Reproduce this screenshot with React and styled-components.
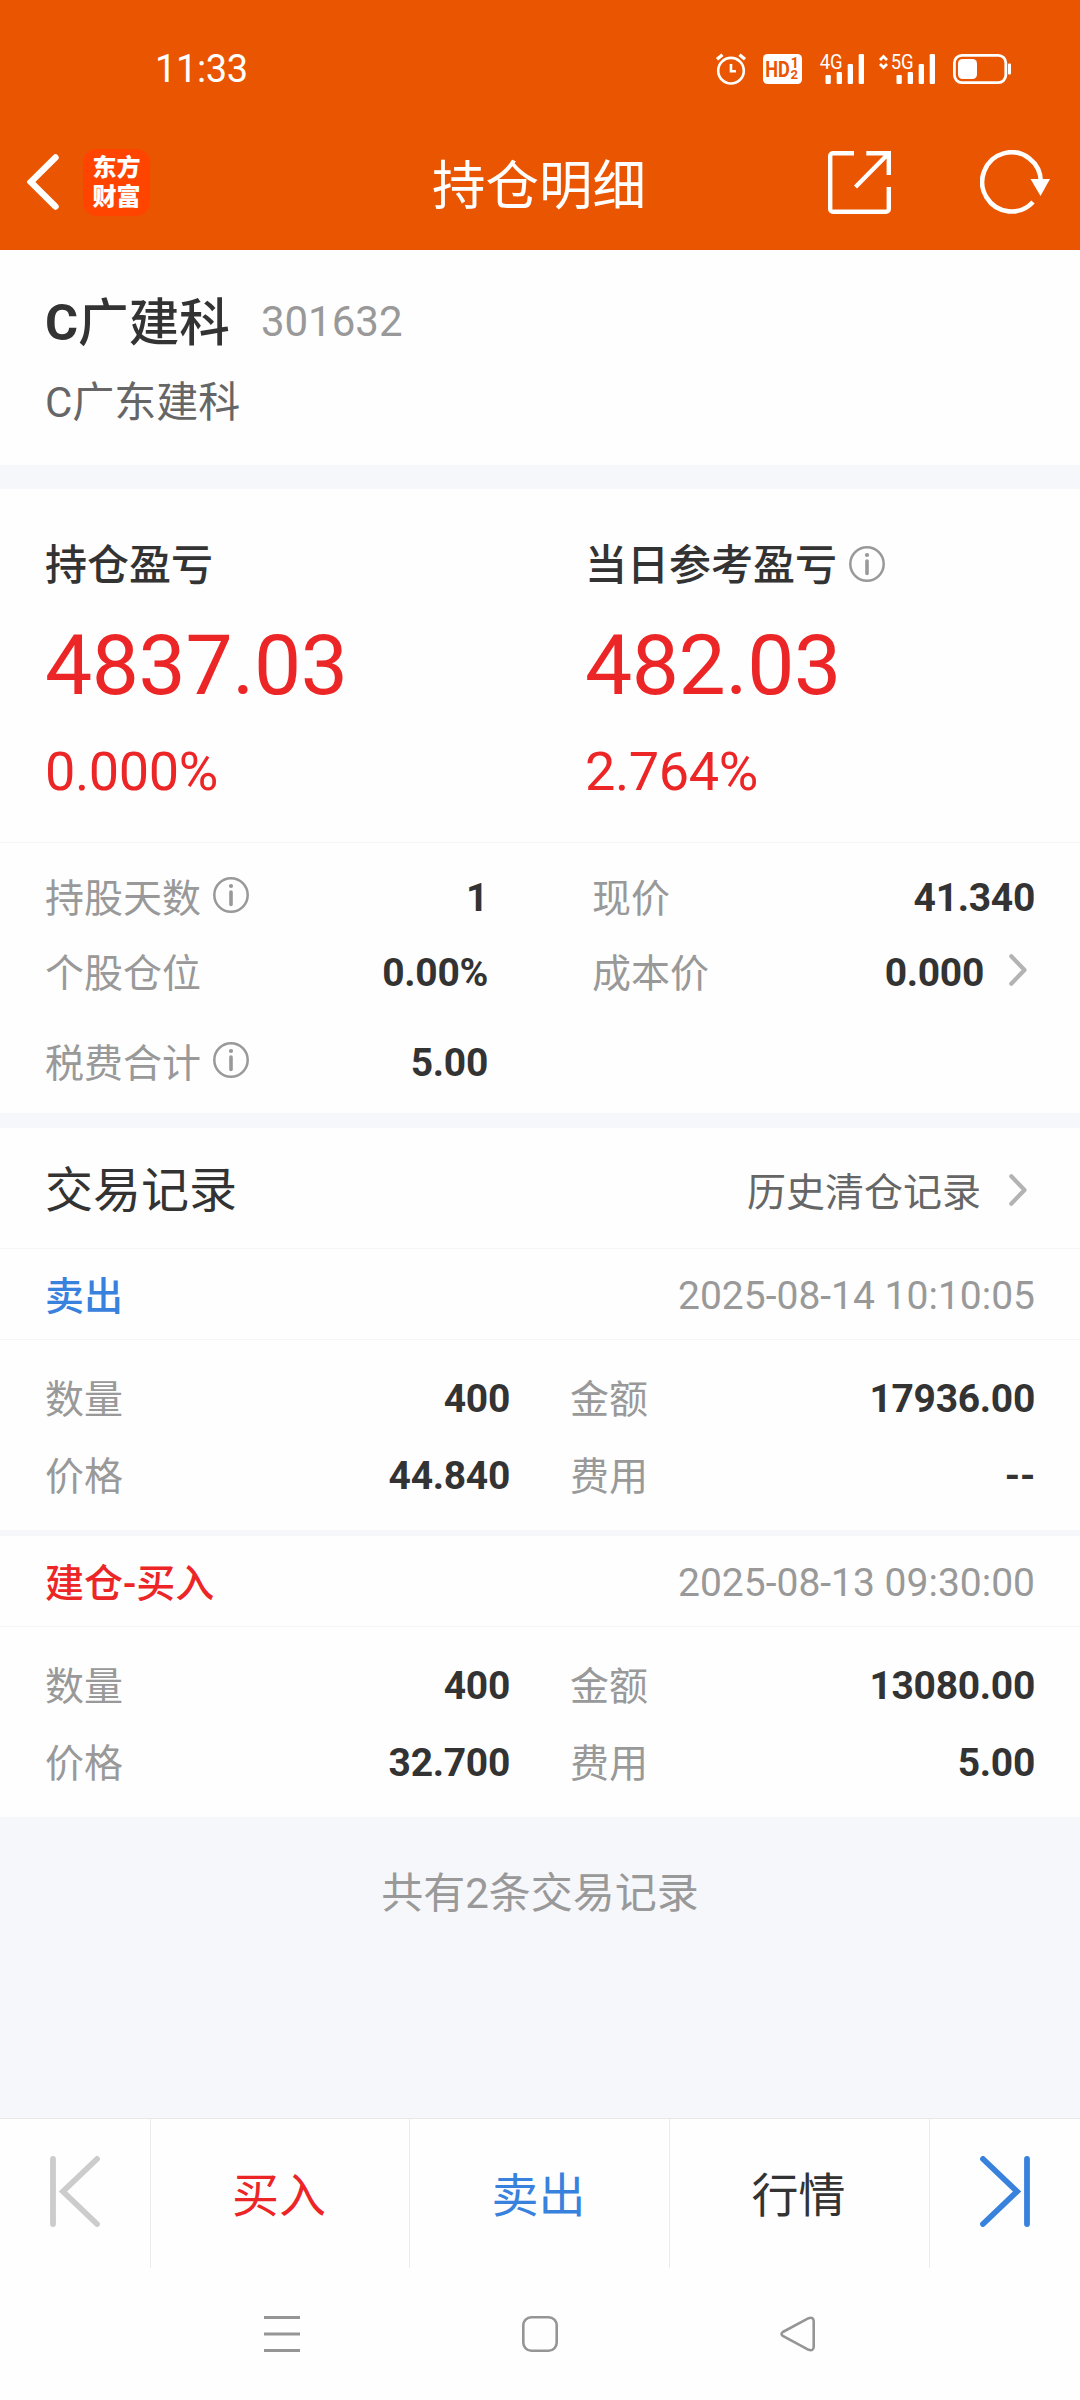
import React from "react";
import styled, { createGlobalStyle, ThemeProvider } from "styled-components";

const theme = {
  primary: "#e95501",
  red: "#ec2626",
  blue: "#3882de",
  text: "#333333",
  gray6: "#666666",
  gray9: "#999999",
  grayF5: "#f6f7fa",
  line: "#f6f6f6",
};

const GlobalStyles = createGlobalStyle`
  * {
    box-sizing: border-box;
  }
  body {
    margin: 0;
    background-color: #fefefe;
    font-family: Roboto, "Noto Sans CJK SC", sans-serif;
    color: #333333;
  }
  svg {
    display: block;
    flex-shrink: 0;
  }
`;

const PageStyles = styled.div`
  width: 1080px;
  height: 2400px;
  display: flex;
  flex-direction: column;
  overflow: hidden;
`;

const HeaderStyles = styled.header`
  height: 250px;
  background-color: ${(props) => props.theme.primary};
  color: #fff;
  .status {
    height: 114px;
    padding: 24px 69px 0 155px;
    display: flex;
    align-items: center;
    justify-content: space-between;
    &-time {
      font-size: 38px;
      letter-spacing: -0.4px;
    }
    &-icons {
      display: flex;
      align-items: center;
    }
  }
  .nav {
    height: 136px;
    padding: 0 30px 0 27px;
    display: grid;
    grid-template-columns: 1fr auto 1fr;
    align-items: center;
    &-left {
      display: flex;
      align-items: center;
      gap: 24px;
    }
    &-title {
      margin: 0;
      padding: 10px 0 0 1px;
      font-size: 53.5px;
      line-height: 60px;
      font-weight: 400;
    }
    &-right {
      display: flex;
      align-items: center;
      justify-content: flex-end;
      gap: 89px;
    }
  }
`;

const StatusIcon = styled.svg`
  margin-left: ${(props) => props.$gap || 0}px;
  font-family: Roboto, sans-serif;
  overflow: visible;
`;

const AppLogo = styled.div`
  width: 67px;
  height: 67px;
  padding-top: 5px;
  border-radius: 14px;
  background-color: #ff4400;
  font-size: 24px;
  line-height: 29px;
  font-weight: 900;
  text-align: center;
`;

const StockStyles = styled.section`
  height: 215px;
  padding: 43px 45px 0;
  .stock {
    &-top {
      display: flex;
      align-items: baseline;
      gap: 31px;
    }
    &-name {
      margin: 0;
      font-size: 50.6px;
      line-height: 60px;
      font-weight: 700;
      .cjk {
        font-weight: 500;
        position: relative;
        top: 1px;
      }
    }
    &-code {
      font-size: 42px;
      line-height: 50px;
      color: ${(props) => props.theme.gray9};
      position: relative;
      top: -4px;
    }
    &-full {
      margin-top: 25px;
      font-size: 42px;
      line-height: 50px;
      color: ${(props) => props.theme.gray6};
    }
  }
`;

const Band = styled.div`
  height: ${(props) => props.$height}px;
  flex-shrink: 0;
  background-color: ${(props) => props.theme.grayF5};
`;

const ProfitStyles = styled.section`
  height: 354px;
  padding: 48px 45px 0;
  display: grid;
  grid-template-columns: 540px 1fr;
  border-bottom: 1px solid ${(props) => props.theme.line};
  .profit {
    &-label {
      display: flex;
      align-items: center;
      gap: 12px;
      font-size: 42px;
      line-height: 50px;
      font-weight: 500;
    }
    &-label span {
      padding-top: 4px;
    }
    &-value {
      margin-top: 25px;
      font-size: 84px;
      line-height: 100px;
      letter-spacing: -0.4px;
      color: ${(props) => props.theme.red};
    }
    &-rate {
      margin-top: 26px;
      font-size: 54px;
      line-height: 60px;
      letter-spacing: -0.4px;
      color: ${(props) => props.theme.red};
    }
  }
`;

const DetailGrid = styled.section`
  height: 270px;
  padding: 17px 45px 0;
  display: grid;
  grid-template-columns: 443px 443px;
  grid-template-rows: 75px 75px 105px;
  column-gap: 104px;
`;

const RowStyles = styled.div`
  display: flex;
  align-items: center;
  justify-content: space-between;
  font-size: 39px;
  line-height: 46px;
  padding-top: ${(props) => props.$top || 0}px;
  padding-bottom: ${(props) => props.$top || 0}px;
  .row-label {
    display: flex;
    align-items: center;
    gap: 12px;
    color: ${(props) => props.theme.gray9};
  }
  .row-label span {
    padding-top: 2px;
  }
  .row-label svg {
    margin-bottom: 5px;
  }
  .row-value {
    display: flex;
    align-items: center;
    gap: 25px;
    font-weight: 700;
    letter-spacing: -0.3px;
    padding-right: ${(props) => (props.$arrow ? 8 : 0)}px;
  }
  .row-value svg {
    margin-bottom: 5px;
  }
`;

const RecordHeader = styled.div`
  height: 121px;
  padding: 0 53px 0 45px;
  display: flex;
  align-items: center;
  justify-content: space-between;
  border-bottom: 1px solid ${(props) => props.theme.line};
  h2 {
    margin: 0;
    padding-top: 6px;
    font-size: 48px;
    line-height: 56px;
    font-weight: 400;
  }
`;

const HistoryLink = styled.div`
  display: flex;
  align-items: center;
  gap: 28px;
  padding-top: 3px;
  font-size: 39px;
  line-height: 46px;
  color: ${(props) => props.theme.gray6};
  span {
    padding-top: 6px;
  }
`;

const TradeStyles = styled.article`
  .trade {
    &-top {
      height: 91px;
      padding: 3px 45px 0;
      display: flex;
      align-items: center;
      justify-content: space-between;
      font-size: 39px;
      line-height: 46px;
      border-bottom: 1px solid ${(props) => props.theme.line};
    }
    &-type {
      padding-top: 2px;
      font-weight: 500;
      color: ${(props) => props.theme[props.$color]};
    }
    &-date {
      color: ${(props) => props.theme.gray9};
    }
    &-body {
      height: 190px;
      padding: 20px 45px 0;
      display: grid;
      grid-template-columns: 1fr 1fr;
      grid-template-rows: 77px 77px;
      column-gap: 60px;
    }
  }
`;

const Summary = styled.div`
  flex: 1;
  padding-top: 52px;
  background-color: ${(props) => props.theme.grayF5};
  font-size: 42px;
  line-height: 50px;
  text-align: center;
  color: ${(props) => props.theme.gray9};
`;

const TabBar = styled.nav`
  height: 150px;
  display: grid;
  grid-template-columns: 151px 259px 260px 260px 150px;
  border-top: 1px solid #e8e8e8;
`;

const TabItem = styled.div`
  display: flex;
  align-items: center;
  justify-content: center;
  padding-right: ${(props) => (props.$icon ? 0 : 2)}px;
  padding-bottom: 5px;
  font-size: 47px;
  color: ${(props) => props.$color};
  border-right: 1px solid #ececec;
  &:last-child {
    border-right: none;
  }
`;

const SystemNav = styled.div`
  height: 132px;
  padding: 0 265px 0 264px;
  display: flex;
  align-items: center;
  justify-content: space-between;
`;

const InfoIcon = () => (
  <svg width="36" height="36" viewBox="0 0 36 36" fill="none">
    <circle cx="18" cy="18" r="16.7" stroke="#999" strokeWidth="2.5" />
    <circle cx="18" cy="9" r="2.1" fill="#999" />
    <path d="M18 15v12.5" stroke="#999" strokeWidth="3.6" strokeLinecap="round" />
  </svg>
);

const ChevronIcon = () => (
  <svg width="18" height="32" viewBox="0 0 18 32" fill="none">
    <path
      d="M2.3 2.3 15.5 16 2.3 29.7"
      stroke="#b3b3b3"
      strokeWidth="4.2"
      strokeLinecap="round"
      strokeLinejoin="round"
    />
  </svg>
);

const AlarmIcon = () => (
  <StatusIcon width="30" height="32" viewBox="0 0 30 32" fill="none" stroke="#fff">
    <circle cx="15" cy="17.7" r="12.8" strokeWidth="2.6" />
    <path d="M15 11v7.3h5" strokeWidth="2.6" />
    <path d="M1 6.3 6.5 1.8M29 6.3 23.5 1.8" strokeWidth="3.4" />
  </StatusIcon>
);

const HdIcon = () => (
  <StatusIcon $gap={17} width="39" height="30" viewBox="0 0 39 30">
    <rect width="39" height="30" rx="4.5" fill="#fff" />
    <g fill={theme.primary} fontWeight="700">
      <text x="2.2" y="23" fontSize="21.5" textLength="24.6" lengthAdjust="spacingAndGlyphs">
        HD
      </text>
      <text x="27.8" y="14.3" fontSize="14">
        1
      </text>
      <text x="27.6" y="25.2" fontSize="13">
        2
      </text>
    </g>
  </StatusIcon>
);

const SignalIcon = ({ label, arrows }) => {
  const x = arrows ? 12 : 0;
  return (
    <StatusIcon
      $gap={arrows ? 15 : 18}
      width={44 + x}
      height="30"
      viewBox={`0 0 ${44 + x} 30`}
      fill="#fff"
    >
      {arrows && (
        <path
          d="M1 6 4.5 2.5 8 6M1 10l3.5 3.5L8 10"
          fill="none"
          stroke="#fff"
          strokeWidth="2.8"
        />
      )}
      <text x={x - 0.3} y="15" fontSize="20.5" textLength="23" lengthAdjust="spacingAndGlyphs">
        {label}
      </text>
      <rect x={x + 5.5} y="21" width="5.3" height="9" rx="1.2" />
      <rect x={x + 16.7} y="18" width="5.3" height="12" rx="1.2" />
      <rect x={x + 27.7} y="10" width="5.3" height="20" rx="1.2" />
      <rect x={x + 38.7} y="0" width="5.3" height="30" rx="1.2" />
    </StatusIcon>
  );
};

const BatteryIcon = () => (
  <StatusIcon $gap={18} width="58" height="30" viewBox="0 0 58 30" fill="none">
    <rect x="1.4" y="1.4" width="51.4" height="27.2" rx="7.5" stroke="#fff" strokeWidth="2.8" />
    <rect x="5" y="5" width="19" height="20" rx="4.5" fill="#fff" />
    <rect x="55" y="9.5" width="3" height="11" rx="1" fill="#fff" />
  </StatusIcon>
);

const BackIcon = () => (
  <svg width="32" height="56" viewBox="0 0 32 56" fill="none">
    <path
      d="M28.5 3.5 3.8 28 28.5 52.5"
      stroke="#fff"
      strokeWidth="6.4"
      strokeLinecap="round"
    />
  </svg>
);

const ShareIcon = () => (
  <svg width="63" height="63" viewBox="0 0 63 63" fill="none" stroke="#fff" strokeWidth="4.4">
    <path d="M26 2.2H5a2.8 2.8 0 0 0-2.8 2.8v53a2.8 2.8 0 0 0 2.8 2.8h53a2.8 2.8 0 0 0 2.8-2.8V36" />
    <path d="M38.3 2.2h22.5V24M60.8 2.2 27.5 36" />
  </svg>
);

const RefreshIcon = () => (
  <svg width="70" height="64" viewBox="0 0 70 64" fill="none">
    <path d="M60.8 32A29.3 29.6 0 1 0 53 52" stroke="#fff" strokeWidth="4.6" />
    <path d="M50.5 29H70L60.5 46z" fill="#fff" />
  </svg>
);

const SkipIcon = ({ flip }) => (
  <svg width="50" height="71" viewBox="0 0 50 71" fill="none">
    <path
      d={flip ? "M47 3v65M3 3l34 32.5L3 68" : "M3 3v65M47 3 13 35.5 47 68"}
      stroke={flip ? theme.blue : "#cccccc"}
      strokeWidth="5.8"
      strokeLinecap="round"
    />
  </svg>
);

const Row = ({ label, value, info, arrow, top }) => (
  <RowStyles $arrow={arrow} $top={top}>
    <div className="row-label">
      <span>{label}</span>
      {info && <InfoIcon></InfoIcon>}
    </div>
    <div className="row-value">
      <span>{value}</span>
      {arrow && <ChevronIcon></ChevronIcon>}
    </div>
  </RowStyles>
);

const Profit = ({ label, value, rate, info }) => (
  <div>
    <div className="profit-label">
      <span>{label}</span>
      {info && <InfoIcon></InfoIcon>}
    </div>
    <div className="profit-value">{value}</div>
    <div className="profit-rate">{rate}</div>
  </div>
);

const Trade = ({ data }) => (
  <TradeStyles $color={data.color}>
    <div className="trade-top">
      <span className="trade-type">{data.type}</span>
      <span className="trade-date">{data.date}</span>
    </div>
    <div className="trade-body">
      <Row label="数量" value={data.amount}></Row>
      <Row label="金额" value={data.total}></Row>
      <Row label="价格" value={data.price}></Row>
      <Row label="费用" value={data.fee}></Row>
    </div>
  </TradeStyles>
);

const trades = [
  {
    type: "卖出",
    color: "blue",
    date: "2025-08-14 10:10:05",
    amount: "400",
    total: "17936.00",
    price: "44.840",
    fee: "--",
  },
  {
    type: "建仓-买入",
    color: "red",
    date: "2025-08-13 09:30:00",
    amount: "400",
    total: "13080.00",
    price: "32.700",
    fee: "5.00",
  },
];

const App = () => {
  return (
    <ThemeProvider theme={theme}>
      <GlobalStyles />
      <PageStyles>
        <HeaderStyles>
          <div className="status">
            <span className="status-time">11:33</span>
            <div className="status-icons">
              <AlarmIcon></AlarmIcon>
              <HdIcon></HdIcon>
              <SignalIcon label="4G"></SignalIcon>
              <SignalIcon label="5G" arrows></SignalIcon>
              <BatteryIcon></BatteryIcon>
            </div>
          </div>
          <div className="nav">
            <div className="nav-left">
              <BackIcon></BackIcon>
              <AppLogo>
                东方
                <br />
                财富
              </AppLogo>
            </div>
            <h1 className="nav-title">持仓明细</h1>
            <div className="nav-right">
              <ShareIcon></ShareIcon>
              <RefreshIcon></RefreshIcon>
            </div>
          </div>
        </HeaderStyles>
        <StockStyles>
          <div className="stock-top">
            <h2 className="stock-name">
              C<span className="cjk">广建科</span>
            </h2>
            <span className="stock-code">301632</span>
          </div>
          <div className="stock-full">C广东建科</div>
        </StockStyles>
        <Band $height={24} />
        <ProfitStyles>
          <Profit label="持仓盈亏" value="4837.03" rate="0.000%"></Profit>
          <Profit label="当日参考盈亏" value="482.03" rate="2.764%" info></Profit>
        </ProfitStyles>
        <DetailGrid>
          <Row label="持股天数" value="1" info></Row>
          <Row label="现价" value="41.340"></Row>
          <Row label="个股仓位" value="0.00%"></Row>
          <Row label="成本价" value="0.000" arrow></Row>
          <Row label="税费合计" value="5.00" info top={15}></Row>
        </DetailGrid>
        <Band $height={15} />
        <RecordHeader>
          <h2>交易记录</h2>
          <HistoryLink>
            <span>历史清仓记录</span>
            <ChevronIcon></ChevronIcon>
          </HistoryLink>
        </RecordHeader>
        <Trade data={trades[0]}></Trade>
        <Band $height={6} />
        <Trade data={trades[1]}></Trade>
        <Summary>共有2条交易记录</Summary>
        <TabBar>
          <TabItem $icon>
            <SkipIcon></SkipIcon>
          </TabItem>
          <TabItem $color={theme.red}>买入</TabItem>
          <TabItem $color={theme.blue}>卖出</TabItem>
          <TabItem $color={theme.text}>行情</TabItem>
          <TabItem $icon>
            <SkipIcon flip></SkipIcon>
          </TabItem>
        </TabBar>
        <SystemNav>
          <svg width="36" height="36" viewBox="0 0 36 36" stroke="#959595" strokeWidth="3">
            <path d="M0 1.5h36M0 18h36M0 34.5h36" />
          </svg>
          <svg width="36" height="36" viewBox="0 0 36 36" fill="none" stroke="#959595" strokeWidth="2.6">
            <rect x="1.3" y="1.3" width="33.4" height="33.4" rx="8" />
          </svg>
          <svg width="35" height="36" viewBox="0 0 35 36" fill="none" stroke="#959595" strokeWidth="2.6">
            <path d="M2.8 16 28.6 2.2Q33.4.6 33.7 5v26Q33.4 35.4 28.6 33.8L2.8 20Q.2 18 2.8 16z" />
          </svg>
        </SystemNav>
      </PageStyles>
    </ThemeProvider>
  );
};

export default App;
